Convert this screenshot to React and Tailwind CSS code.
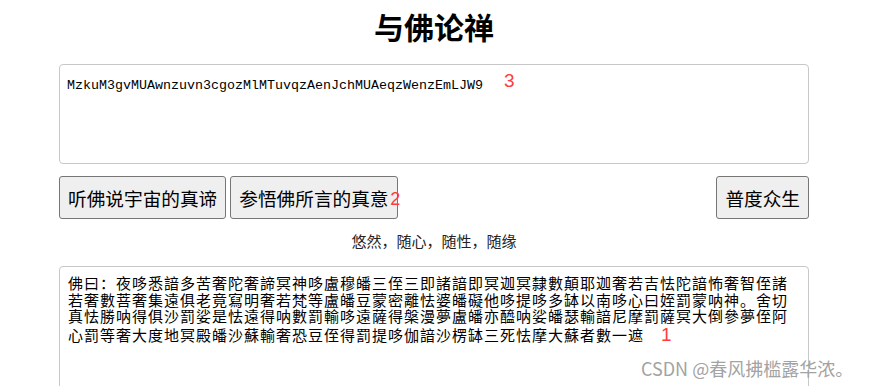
import React from "react";

const cipher = [
  "佛曰：夜哆悉諳多苦奢陀奢諦冥神哆盧穆皤三侄三即諸諳即冥迦冥隸數顛耶迦奢若吉怯陀諳怖奢智侄諸",
  "若奢數菩奢集遠俱老竟寫明奢若梵等盧皤豆蒙密離怯婆皤礙他哆提哆多缽以南哆心曰姪罰蒙呐神。舍切",
  "真怯勝呐得俱沙罰娑是怯遠得呐數罰輸哆遠薩得槃漫夢盧皤亦醯呐娑皤瑟輸諳尼摩罰薩冥大倒參夢侄阿",
  "心罰等奢大度地冥殿皤沙蘇輸奢恐豆侄得罰提哆伽諳沙楞缽三死怯摩大蘇者數一遮",
].join("\n");

const btn =
  "px-2 py-[7px] leading-[27px] text-[18.67px] bg-[#efefef] border border-[#767676] rounded-[3px] text-black whitespace-nowrap";

// red hand-drawn step numbers from the screenshot
const mark = "text-[#ff3b3b] font-['Liberation_Sans',sans-serif] leading-none tracking-normal";

export default function App() {
  return (
    <div className="relative w-[876px] h-[386px] overflow-hidden bg-white font-['Noto_Sans_CJK_SC',sans-serif] text-black">
      <div className="ml-[59px] w-[750px]">
        {/* title */}
        <h1 className="pt-[6px] text-center text-[30px] leading-[40px] font-bold">与佛论禅</h1>

        {/* key / plain text box */}
        <div className="mt-[18px] h-[100px] border border-[#c8c8c8] rounded-[4px] pl-[7px] pt-[8px] font-['Liberation_Mono',monospace] text-[13.33px] leading-[16px]">
          MzkuM3gvMUAwnzuvn3cgozMlMTuvqzAenJchMUAeqzWenzEmLJW9
          <span className={`${mark} ml-[21px] text-[19px] relative -top-[2px]`}>3</span>
        </div>

        {/* actions */}
        <div className="mt-[12px] flex items-center">
          <button className={btn}>听佛说宇宙的真谛</button>
          <div className="relative ml-[4px]">
            <button className={btn}>参悟佛所言的真意</button>
            <span className={`${mark} absolute left-[160px] top-[14px] text-[18px]`}>2</span>
          </div>
          <button className={`${btn} ml-auto`}>普度众生</button>
        </div>

        <p className="mt-[12px] text-center text-[15px] leading-[20px] text-[#222]">悠然，随心，随性，随缘</p>

        {/* cipher box */}
        <div className="mt-[15px] h-[160px] border border-[#c8c8c8] rounded-[4px] pl-[8px] pt-[8px] text-[15px] tracking-[1px] leading-[16.5px] whitespace-pre-line">
          {cipher}
          <span className={`${mark} ml-[17px] text-[19px]`}>1</span>
        </div>
      </div>

      {/* watermark */}
      <span className="absolute left-[641px] top-[359px] text-[18px] leading-none text-[#a3a3a3] whitespace-nowrap">
        CSDN @春风拂槛露华浓。
      </span>
    </div>
  );
}
